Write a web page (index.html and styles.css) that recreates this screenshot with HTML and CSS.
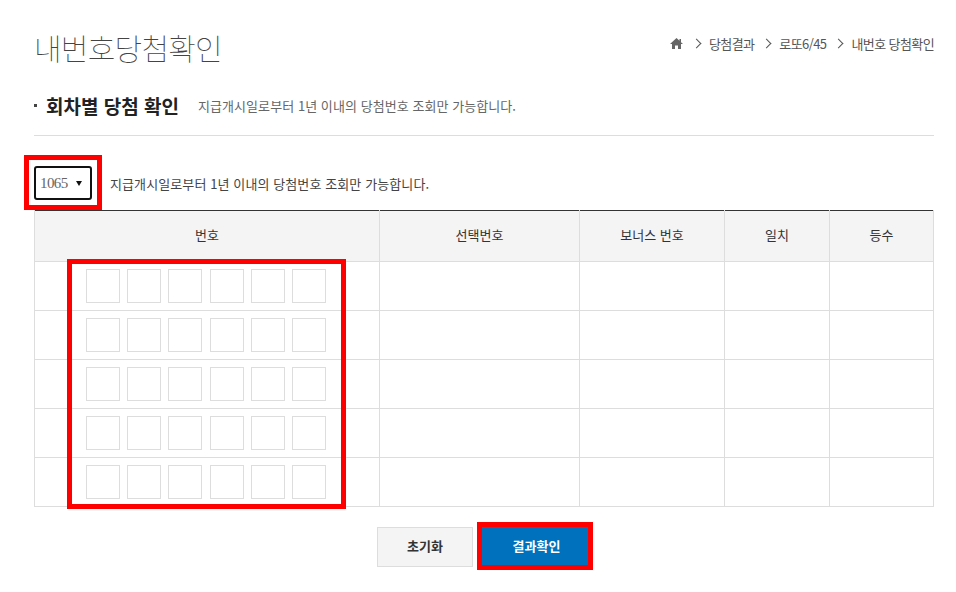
FILE: index.html
```html
<!DOCTYPE html>
<html lang="ko">
<head>
    <meta charset="UTF-8">
    <meta name="viewport" content="width=device-width, initial-scale=1.0">
    <title>내번호당첨확인</title>
    <link rel="stylesheet" href="styles.css">
</head>
<body>
    <div id="container">
        <div class="top">
            <h1>내번호당첨확인</h1>
            <div class="crumbs">
                <svg class="home" width="13" height="11" viewBox="0 0 13 11"><path d="M6.5 0 0 6h2v5h3V7.5h3V11h3V6h2L11 4.2V1H9.5v1.8z" fill="#666"/></svg>
                <i class="arrow"></i>
                <span>당첨결과</span>
                <i class="arrow"></i>
                <span>로또6/45</span>
                <i class="arrow"></i>
                <span>내번호 당첨확인</span>
            </div>
        </div>
        <div class="subhead">
            <span class="dot"></span>
            <h2>회차별 당첨 확인</h2>
            <p>지급개시일로부터 1년 이내의 당첨번호 조회만 가능합니다.</p>
        </div>
        <div class="pick">
            <div class="select">1065<i class="caret"></i></div>
            <p>지급개시일로부터 1년 이내의 당첨번호 조회만 가능합니다.</p>
        </div>
        <table>
            <thead>
                <tr>
                    <th class="c1">번호</th>
                    <th class="c2">선택번호</th>
                    <th class="c3">보너스 번호</th>
                    <th class="c4">일치</th>
                    <th class="c5">등수</th>
                </tr>
            </thead>
            <tbody id="rows"></tbody>
        </table>
        <div class="buttons">
            <button class="reset">초기화</button>
            <button class="check">결과확인</button>
        </div>

        <div class="mark mark-select"></div>
        <div class="mark mark-numbers"></div>
        <div class="mark mark-check"></div>
    </div>

    <script>
        const rows = document.getElementById('rows');
        for (let r = 0; r < 5; r++) {
            let balls = '';
            for (let b = 0; b < 6; b++) {
                balls += '<span class="ball"></span>';
            }
            rows.innerHTML += `<tr>
                <td><div class="balls">${balls}</div></td>
                <td></td><td></td><td></td><td></td>
            </tr>`;
        }
    </script>
</body>
</html>
```

FILE: styles.css
```css
body {
    margin: 0;
    padding: 0;
    background-color: #fff;
    font-family: "Noto Sans CJK KR", "Noto Sans", sans-serif;
    color: #333;
}
#container {
    position: relative;
    width: 900px;
    height: 592px;
    margin-left: 34px;
    overflow: visible;
}
.top {
    display: flex;
    justify-content: space-between;
    align-items: center;
    height: 94px;
}
h1 {
    margin: 0;
    font-size: 30px;
    font-weight: 100;
    line-height: 46px;
    letter-spacing: -0.75px;
    color: #444;
}
.crumbs {
    display: flex;
    align-items: center;
    margin-bottom: 8px;
    font-size: 13px;
    letter-spacing: -0.6px;
    color: #555;
}
.home {
    margin-right: 10px;
}
.arrow {
    width: 6px;
    height: 6px;
    margin-right: 9px;
    border-top: 1px solid #555;
    border-right: 1px solid #555;
    transform: rotate(45deg);
}
.crumbs span {
    margin-right: 9px;
}
.crumbs span:last-child {
    margin-right: 0;
}
.subhead {
    display: flex;
    align-items: center;
    box-sizing: border-box;
    height: 42px;
    padding-bottom: 18px;
    border-bottom: 1px solid #ddd;
}
.dot {
    width: 3px;
    height: 3px;
    margin-right: 9px;
    background-color: #444;
}
h2 {
    margin: 0 19px 0 0;
    font-size: 19px;
    font-weight: 700;
    line-height: 26px;
    color: #222;
}
.subhead p {
    margin: 0;
    font-size: 13px;
    letter-spacing: 0.06px;
    color: #666;
}
.pick {
    display: flex;
    align-items: center;
    box-sizing: border-box;
    height: 74px;
    padding-top: 20px;
}
.select {
    display: flex;
    align-items: center;
    box-sizing: border-box;
    width: 58px;
    height: 34px;
    padding-left: 4px;
    border: 2px solid #111;
    border-radius: 3px;
    font-family: "Liberation Serif", serif;
    font-size: 15px;
    letter-spacing: -0.6px;
    color: #666;
}
.caret {
    width: 0;
    height: 0;
    margin-left: 8px;
    border-left: 3.5px solid transparent;
    border-right: 3.5px solid transparent;
    border-top: 5px solid #111;
}
.pick p {
    margin: 0 0 0 18px;
    font-size: 13px;
    letter-spacing: 0.1px;
    color: #444;
}
table {
    width: 900px;
    border-collapse: collapse;
    table-layout: fixed;
    border-top: 1px solid #333;
}
th, td {
    padding: 0;
    border: 1px solid #ddd;
}
thead tr:first-child th {
    border-top: 0;
}
th {
    box-sizing: border-box;
    height: 51px;
    padding-bottom: 3px;
    background-color: #f4f4f4;
    font-size: 13px;
    font-weight: 400;
    color: #333;
}
td {
    height: 48px;
}
.c1 { width: 345px; }
.c2 { width: 200px; }
.c3 { width: 145px; }
.c4 { width: 105px; }
.balls {
    display: flex;
    gap: 7.2px;
    margin-left: 51px;
}
.ball {
    box-sizing: border-box;
    width: 34px;
    height: 34px;
    border: 1px solid #ddd;
}
.buttons {
    display: flex;
    justify-content: center;
    gap: 9px;
    margin-top: 20px;
    padding-right: 2px;
}
button {
    box-sizing: border-box;
    height: 40px;
    padding: 0 0 3px;
    font-family: inherit;
    font-size: 13px;
    font-weight: 700;
    cursor: pointer;
}
.reset {
    width: 96px;
    border: 1px solid #ddd;
    background-color: #f4f4f4;
    color: #333;
}
.check {
    width: 107px;
    padding-left: 2px;
    border: 1px solid #0071bc;
    background-color: #0071bc;
    color: #fff;
}
.mark {
    position: absolute;
    box-sizing: border-box;
    border: 5px solid #f00;
}
.mark-select {
    left: -10px;
    top: 155px;
    width: 78px;
    height: 55px;
}
.mark-numbers {
    left: 33px;
    top: 259px;
    width: 279px;
    height: 250px;
}
.mark-check {
    left: 443px;
    top: 522px;
    width: 116px;
    height: 48px;
}
```
